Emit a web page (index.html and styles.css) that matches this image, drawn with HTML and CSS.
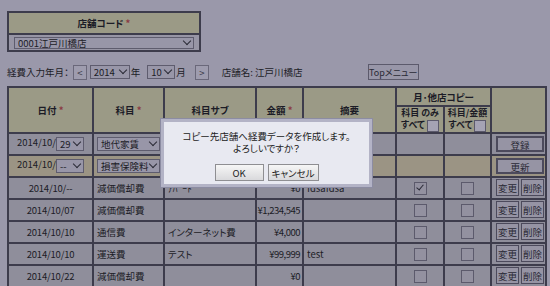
FILE: index.html
```html
<!DOCTYPE html>
<html lang="ja">

<head>
    <meta charset="UTF-8">
    <title>経費入力</title>
    <link rel="stylesheet" href="styles.css">
</head>

<body>
    <!-- 店舗選択 -->
    <div class="store">
        <div class="store-head">店舗コード <span class="req">*</span></div>
        <div class="store-body">
            <span class="sel sel-store"><select><option>0001江戸川橋店</option></select></span>
        </div>
    </div>

    <!-- 年月 -->
    <div class="month-bar">
        <span>経費入力年月：</span>
        <button class="nav-btn nav-prev">&lt;</button>
        <span class="sel sel-year"><select><option>2014</option></select></span>
        <span class="unit">年</span>
        <span class="sel sel-month"><select><option>10</option></select></span>
        <span class="unit">月</span>
        <button class="nav-btn">&gt;</button>
        <span class="shop-name">店舗名: 江戸川橋店</span>
        <button class="top-btn">Topメニュー</button>
    </div>

    <!-- 経費一覧 -->
    <table class="expense">
        <colgroup>
            <col style="width:85px">
            <col style="width:71px">
            <col style="width:92px">
            <col style="width:47px">
            <col style="width:93px">
            <col style="width:48px">
            <col style="width:47px">
            <col style="width:55px">
        </colgroup>
        <thead>
            <tr class="head-top">
                <th rowspan="2">日付 <span class="req">*</span></th>
                <th rowspan="2">科目 <span class="req">*</span></th>
                <th rowspan="2">科目サブ</th>
                <th rowspan="2">金額 <span class="req">*</span></th>
                <th rowspan="2">摘要</th>
                <th colspan="2">月･他店コピー</th>
                <th rowspan="2"></th>
            </tr>
            <tr class="head-sub">
                <th>科目 のみ<br>すべて <span class="chk chk-head"></span></th>
                <th>科目/金額<br>すべて <span class="chk chk-head"></span></th>
            </tr>
        </thead>
        <tbody>
            <tr class="row-new">
                <td class="c">2014/10/<span class="sel sel-day"><select><option>29</option></select></span></td>
                <td><span class="sel sel-item"><select><option>地代家賃</option></select></span></td>
                <td></td>
                <td></td>
                <td></td>
                <td></td>
                <td></td>
                <td class="c"><button class="tbtn tbtn-wide">登録</button></td>
            </tr>
            <tr class="row-edit">
                <td class="c">2014/10/<span class="sel sel-day"><select><option>--</option></select></span></td>
                <td><span class="sel sel-item"><select><option>損害保険料</option></select></span></td>
                <td></td>
                <td></td>
                <td></td>
                <td></td>
                <td></td>
                <td class="c"><button class="tbtn tbtn-wide">更新</button></td>
            </tr>
            <tr>
                <td class="c date">2014/10/--</td>
                <td>減価償却費</td>
                <td>ｱﾊﾟｰﾄ</td>
                <td class="r">¥0</td>
                <td>fdsafdsa</td>
                <td class="c"><span class="chk checked"></span></td>
                <td class="c"><span class="chk"></span></td>
                <td class="c"><button class="tbtn">変更</button><button class="tbtn">削除</button></td>
            </tr>
            <tr>
                <td class="c date">2014/10/07</td>
                <td>減価償却費</td>
                <td></td>
                <td class="r">¥1,234,545</td>
                <td></td>
                <td class="c"><span class="chk"></span></td>
                <td class="c"><span class="chk"></span></td>
                <td class="c"><button class="tbtn">変更</button><button class="tbtn">削除</button></td>
            </tr>
            <tr>
                <td class="c date">2014/10/10</td>
                <td>通信費</td>
                <td>インターネット費</td>
                <td class="r">¥4,000</td>
                <td></td>
                <td class="c"><span class="chk"></span></td>
                <td class="c"><span class="chk"></span></td>
                <td class="c"><button class="tbtn">変更</button><button class="tbtn">削除</button></td>
            </tr>
            <tr>
                <td class="c date">2014/10/10</td>
                <td>運送費</td>
                <td>テスト</td>
                <td class="r">¥99,999</td>
                <td>test</td>
                <td class="c"><span class="chk"></span></td>
                <td class="c"><span class="chk"></span></td>
                <td class="c"><button class="tbtn">変更</button><button class="tbtn">削除</button></td>
            </tr>
            <tr>
                <td class="c date">2014/10/22</td>
                <td>減価償却費</td>
                <td></td>
                <td class="r">¥0</td>
                <td></td>
                <td class="c"><span class="chk"></span></td>
                <td class="c"><span class="chk"></span></td>
                <td class="c"><button class="tbtn">変更</button><button class="tbtn">削除</button></td>
            </tr>
        </tbody>
    </table>

    <!-- 確認ダイアログ -->
    <div class="dialog">
        <p class="dialog-msg">コピー先店舗へ経費データを作成します。<br>よろしいですか？</p>
        <div class="dialog-btns">
            <button class="dlg-btn">OK</button>
            <button class="dlg-btn dlg-cancel">キャンセル</button>
        </div>
    </div>
</body>

</html>
```

FILE: styles.css
```css
body {
    margin: 0;
    padding: 11px 0 0 7px;
    background-color: #9a98aa;
    font-family: "Noto Sans CJK JP", sans-serif;
    font-size: 9.5px;
    line-height: 12px;
    font-feature-settings: "palt";
    color: #1c1c26;
}

button,
select {
    font-family: inherit;
    font-size: inherit;
    font-feature-settings: "palt";
    white-space: nowrap;
}

.req {
    color: #8a3c44;
}

/* select boxes */
.sel {
    display: inline-block;
    position: relative;
    vertical-align: middle;
}

.sel select {
    appearance: none;
    -webkit-appearance: none;
    display: block;
    width: 100%;
    height: 100%;
    margin: 0;
    padding: 0 0 0 3px;
    border: 1px solid #5e5c6e;
    border-radius: 0;
    background-color: #9896a8;
    font-weight: normal;
    line-height: 10px;
    color: #1c1c26;
}

.sel::after {
    content: "";
    position: absolute;
    right: 4px;
    top: 50%;
    width: 5px;
    height: 5px;
    margin-top: -5px;
    border-right: 1.5px solid #2a2a36;
    border-bottom: 1.5px solid #2a2a36;
    transform: rotate(45deg);
    pointer-events: none;
}

.store {
    width: 194px;
    box-sizing: border-box;
    border: 2px solid #3d3c4c;
}

.store-head {
    height: 20px;
    line-height: 20px;
    text-align: center;
    font-weight: bold;
    background-color: #9b9a86;
    border-bottom: 2px solid #3d3c4c;
}

.store-body {
    padding: 2px 5px 1px;
    background-color: #9795a5;
}

.sel-store {
    display: block;
    width: 180px;
    height: 12px;
}

/* month bar */
.month-bar {
    display: flex;
    align-items: center;
    height: 16px;
    margin-top: 12px;
}

.nav-btn {
    width: 14px;
    height: 15px;
    margin: 0 3px 0 4px;
    padding: 0;
    border: 1px solid #6a687a;
    background-color: #9e9cae;
    color: #3a3a48;
}

.sel-year {
    width: 40px;
    height: 14px;
}

.sel-month {
    width: 28px;
    height: 14px;
}

.unit {
    margin: 0 7px 0 1px;
}

.unit + .nav-btn {
    margin-left: 2px;
}

.shop-name {
    width: 146px;
    margin-left: 10px;
}

.top-btn {
    width: 51px;
    height: 16px;
    padding: 0;
    border: 1px solid #5c5a6c;
    background-color: #9896a8;
    font-size: 9px;
    color: #2a2a36;
}

/* expense table */
.expense {
    margin-top: 6px;
    width: 538px;
    table-layout: fixed;
    border-collapse: collapse;
}

.expense th,
.expense td {
    border: 2px solid #3d3c4c;
    padding: 0 3px;
    height: 20px;
    white-space: nowrap;
    overflow: hidden;
}

.expense td {
    background-color: #8f8e9b;
}

.expense th {
    background-color: #9b9a86;
    font-weight: bold;
}

.head-top th {
    height: 17px;
}

.head-sub th {
    height: 23px;
    padding: 0 1px;
    font-size: 9px;
    line-height: 12px;
}

.expense .c {
    text-align: center;
}

.expense .r {
    padding: 0 2px 0 0;
    text-align: right;
    letter-spacing: -0.5px;
}

.date {
    letter-spacing: -0.2px;
}

.row-edit td {
    background-color: #9b9484;
}

.sel-day {
    width: 28px;
    height: 14px;
}

.sel-item {
    width: 63px;
    height: 14px;
}

/* checkboxes */
.chk {
    display: inline-block;
    position: relative;
    width: 11px;
    height: 11px;
    vertical-align: middle;
    border: 1px solid #5c5a6c;
    background-color: #9391a0;
}

.chk-head {
    width: 10px;
    height: 10px;
    background-color: #a5a3b4;
}

.chk.checked::after {
    content: "";
    position: absolute;
    left: 3px;
    top: 0;
    width: 3px;
    height: 6px;
    border-right: 1.5px solid #2a2a36;
    border-bottom: 1.5px solid #2a2a36;
    transform: rotate(40deg);
}

/* table buttons */
.tbtn {
    width: 23px;
    height: 17px;
    margin: 0 1px;
    padding: 0;
    border: 1px solid #4c4a5c;
    background-color: #9694a4;
    color: #2a2a36;
    vertical-align: middle;
}

.tbtn-wide {
    width: 48px;
    height: 16px;
    border-width: 2px;
}

/* confirm dialog */
.dialog {
    position: absolute;
    left: 161px;
    top: 119px;
    width: 211px;
    box-sizing: border-box;
    padding: 8px 0 3px;
    border: 3px solid #b3b3c6;
    box-shadow: 0 0 0 1px #8c8ca2;
    background-color: #e8e9f1;
    text-align: center;
}

.dialog-msg {
    margin: 0;
    line-height: 12px;
    color: #222;
}

.dialog-btns {
    display: flex;
    justify-content: center;
    gap: 4px;
    margin-top: 10px;
}

.dlg-btn {
    width: 49px;
    height: 17px;
    padding: 0;
    border: 1px solid #8e8e92;
    background: linear-gradient(#f6f6f6, #d9d9dc);
    color: #222;
}

.dlg-cancel {
    width: 51px;
}
```
